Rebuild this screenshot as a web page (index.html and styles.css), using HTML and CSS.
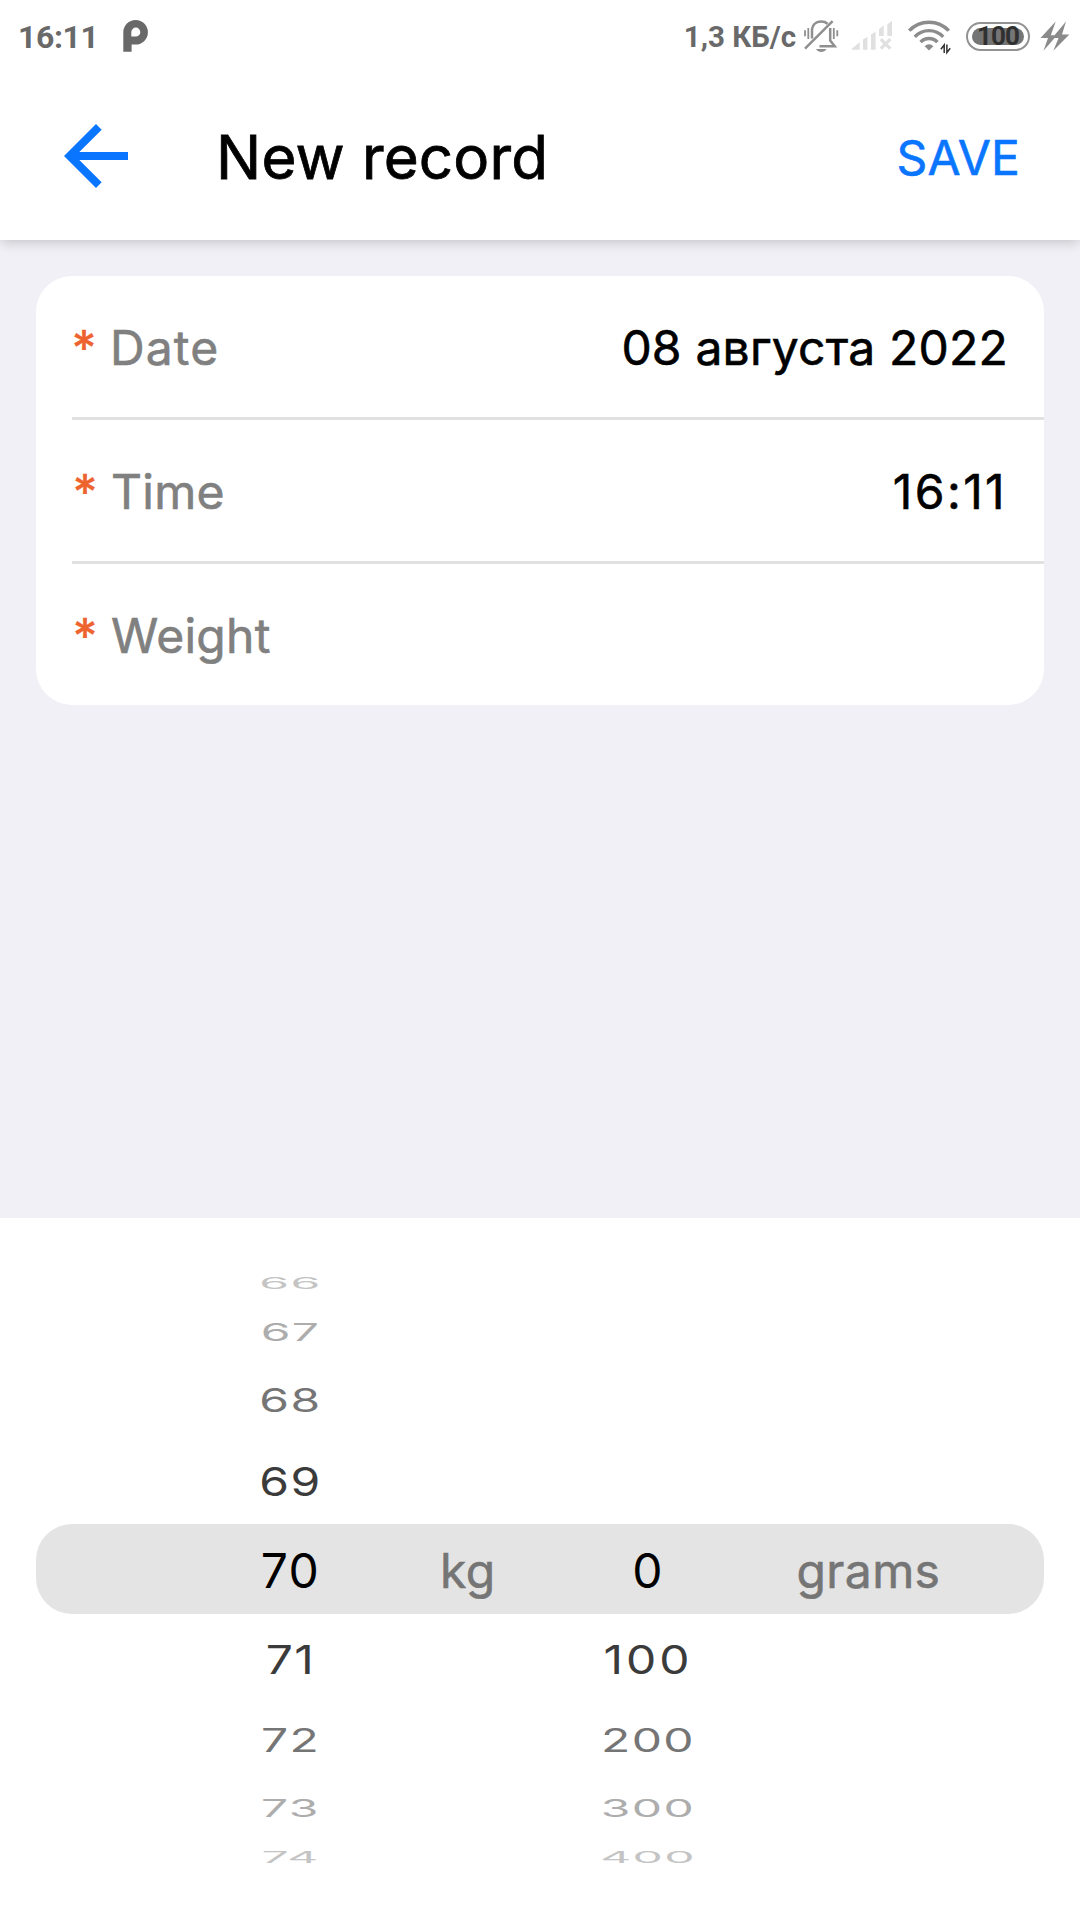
FILE: index.html
```html
<!DOCTYPE html>
<html lang="en">
<head>
<meta charset="utf-8">
<title>New record</title>
<link rel="stylesheet" href="styles.css">
</head>
<body>
<div class="status">
  <span class="clock">16:11</span>
  <svg class="p-icon" width="26" height="34" viewBox="123 19 26 34"><path fill="#696969" fill-rule="evenodd" d="M123.3 51.7V32.3a12.3 12.3 0 1 1 12.3 12.3h-4V51.7zM131.3 36.6h4.4a4.5 4.5 0 1 0-4.4-4.5z"/></svg>
  <span class="speed">1,3 КБ/с</span>
  <svg class="bell" width="36" height="36" viewBox="803 18 36 36" fill="none" stroke="#8f8f8f" stroke-width="2.500">
    <path d="M805 48.700 832.600 21.200"/>
    <path stroke-width="1.800" d="M805 30.300v6M808.300 28v11M837.300 30.300v6M833.800 28v11"/>
    <path d="M812 38.500v-7.300c0-5.800 3.600-9.700 9.300-9.700 2.600 0 4.600.8 6.300 2.200M830.200 28v12.500l4.500 5.700H819.500"/>
    <path fill="#8f8f8f" stroke="none" d="M816 49h10.500c-2 4-8.500 4-10.500 0z"/>
  </svg>
  <svg class="signal" width="42" height="36" viewBox="851 18 42 36"><g fill="#e0e0e0"><path d="M852 49.700v-1.200l7.700-6.300v7.500zM863 39.500l4.400-2.700v12.900H863zM871 34.500l4.600-2.700v17.900H871zM879 29.300l4.700-4V36H879zM887.300 24.300l4.700-3.300v15h-4.700z"/></g><path stroke="#e0e0e0" stroke-width="3.200" d="m880.800 39.200 9.500 9.500m0-9.500-9.500 9.500"/></svg>
  <svg class="wifi" width="44" height="38" viewBox="907 18 44 38"><g fill="none" stroke="#8c8c8c" stroke-width="3.400"><path d="M909.200 31.700a27.300 27.300 0 0 1 39.600 0M914.800 37.800a19.500 19.500 0 0 1 28.400 0M920.600 43.200a11.500 11.500 0 0 1 16.800 0"/></g><path fill="#8c8c8c" d="M924.700 47.300c2.200-2.700 6.400-2.700 8.600 0L929 51.500z"/><path stroke="#333" stroke-width="1.500" fill="none" d="M944.200 54v-8l-3.300 4.300M946.900 45.500v8l3.300-4.300"/></svg>
  <div class="battery"><span class="level">100</span></div>
  <svg class="bolt" width="30" height="32" viewBox="1040 20 30 32" fill="#8a8a8a"><path d="M1055.700 21.500 1040.500 38h7.500l-4.500 12.700L1057 35.200h-6.200zM1066 21.500 1052.200 38h6.400l-5.300 12.700L1069.400 34.600h-7.400z"/></svg>
</div>
<header class="header">
  <svg class="back" width="96" height="96" viewBox="0 0 24 24"><path fill="#0a75ff" d="M20 11H7.830l5.590-5.590L12 4l-8 8 8 8 1.410-1.410L7.830 13H20z"/></svg>
  <h1 class="title">New record</h1>
  <span class="save">SAVE</span>
</header>
<main class="content">
  <div class="card">
    <div class="row"><span class="star">*</span><span class="label label-date">Date</span><span class="value">08 августа 2022</span></div>
    <div class="row"><span class="star">*</span><span class="label">Time</span><span class="value time">16:11</span></div>
    <div class="row"><span class="star">*</span><span class="label">Weight</span></div>
  </div>
</main>
<section class="picker">
  <div class="band"></div>
  <div class="wheel kilos">
    <span class="item d4">66</span><span class="item d3">67</span><span class="item d2">68</span><span class="item d1">69</span>
    <span class="item d0">70</span>
    <span class="item d1">71</span><span class="item d2">72</span><span class="item d3">73</span><span class="item d4">74</span>
  </div>
  <span class="unit unit-kg">kg</span>
  <div class="wheel grams">
    <span class="item d4"></span><span class="item d3"></span><span class="item d2"></span><span class="item d1"></span>
    <span class="item d0">0</span>
    <span class="item d1 hundred">100</span><span class="item d2">200</span><span class="item d3">300</span><span class="item d4">400</span>
  </div>
  <span class="unit unit-g">grams</span>
</section>
</body>
</html>
```
FILE: styles.css
```css
* { box-sizing: border-box; }
body {
  margin: 0;
  width: 1080px;
  height: 1920px;
  display: flex;
  flex-direction: column;
  overflow: hidden;
  background: #f1f0f6;
  font-family: Inter, "Liberation Sans", sans-serif;
  font-size: 48px;
  color: #000;
}

.status {
  position: relative;
  z-index: 1;
  height: 72px;
  flex: none;
  display: flex;
  align-items: center;
  padding: 0 10px 0 18px;
  background: #fff;
  font-family: Roboto, sans-serif;
  font-weight: 700;
  color: #696969;
  white-space: nowrap;
}
.status svg { flex: none; }
.clock { width: 105px; padding-top: 1px; font-size: 32px; letter-spacing: -0.4px; }
.speed { margin-left: auto; margin-right: 7px; padding-top: 1px; font-size: 29.5px; }
.signal { margin-left: 12px; }
.wifi { margin-left: 14px; }
.battery {
  flex: none;
  width: 64px;
  height: 29px;
  margin: 0 10px 0 15px;
  padding: 4px 4px;
  border: 2px solid #929292;
  border-radius: 15px;
}
.level {
  display: block;
  height: 17px;
  border-radius: 9px;
  background: #757575;
  color: #303030;
  font-size: 26px;
  font-weight: 700;
  line-height: 17px;
  letter-spacing: -1px;
  text-align: center;
}

.header {
  height: 168px;
  flex: none;
  display: flex;
  align-items: center;
  padding: 0 60px 0 48px;
  background: #fff;
  box-shadow: 0 3px 12px -1px rgba(0, 0, 0, 0.2);
}
.title {
  margin: 0 auto 0 72px;
  padding-top: 2px;
  font-size: 60px;
  font-weight: 400;
  line-height: 72px;
  letter-spacing: 0.2px;
  -webkit-text-stroke: 0.8px;
}
.save { padding-top: 2px; color: #0a75ff; letter-spacing: 0.2px; -webkit-text-stroke: 0.6px; }

.content { flex: 1; padding: 36px; }
.card {
  border-radius: 36px;
  background: #fff;
  padding-left: 36px;
}
.row {
  height: 144px;
  display: flex;
  align-items: center;
  padding: 2px 36px 0 1px;
  border-bottom: 3px solid #e1e1e1;
  letter-spacing: 0.3px;
  -webkit-text-stroke: 0.6px;
}
.row:last-child { height: 141px; border-bottom: 0; }
.row:first-child { padding-left: 0; }
.star { width: 38px; color: #ee622d; }
.label { color: #808080; }
.label-date { letter-spacing: 1.1px; }
.value { margin-left: auto; letter-spacing: 0.2px; }
.time { padding-right: 1px; letter-spacing: 2.4px; }

.picker {
  position: relative;
  height: 702px;
  flex: none;
  display: flex;
  align-items: center;
  background: #fff;
}
.band {
  position: absolute;
  left: 36px;
  right: 36px;
  top: 306px;
  height: 90px;
  border-radius: 36px;
  background: #e4e4e4;
}
.wheel {
  position: relative;
  display: flex;
  flex-direction: column;
  width: 140px;
  padding-top: 1px;
}
.kilos { margin-left: 220px; }
.grams { margin-left: 82px; }
.item {
  display: flex;
  align-items: center;
  justify-content: center;
  padding-left: 1px;
  letter-spacing: 1.4px;
}
.hundred { letter-spacing: 2.9px; }
.d0 { height: 90px; padding-top: 2px; }
.d1 { height: 88px; color: #3b3b3b; transform: scaleY(0.83); }
.d2 { height: 74px; color: #757575; transform: scaleY(0.665); }
.d3 { height: 62px; color: #adadad; transform: scaleY(0.5); }
.d4 { height: 36px; color: #c4c4c4; transform: scaleY(0.333); }
.unit {
  position: relative;
  padding-top: 2px;
  color: #757575;
  letter-spacing: 0.4px;
  -webkit-text-stroke: 0.6px;
}
.unit-kg { margin-left: 80px; }
.unit-g { margin-left: 79px; }
```
